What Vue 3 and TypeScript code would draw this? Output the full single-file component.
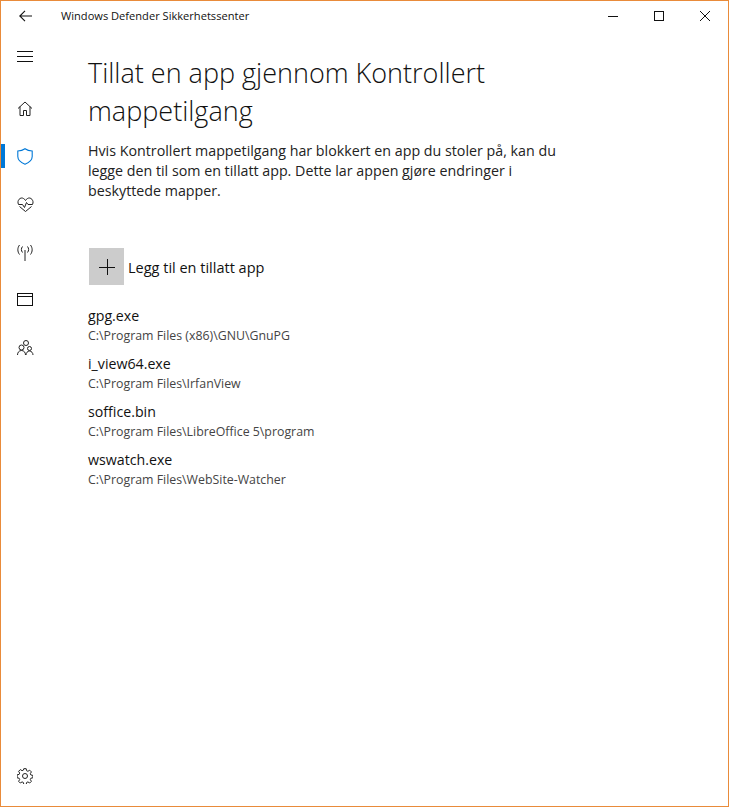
<script setup lang="ts">
const apps = [
  { name: "gpg.exe", path: "C:\\Program Files (x86)\\GNU\\GnuPG" },
  { name: "i_view64.exe", path: "C:\\Program Files\\IrfanView" },
  { name: "soffice.bin", path: "C:\\Program Files\\LibreOffice 5\\program" },
  { name: "wswatch.exe", path: "C:\\Program Files\\WebSite-Watcher" },
];
</script>

<template>
  <div class="window">
    <header class="titlebar">
      <button class="back" type="button" aria-label="Tilbake">
        <svg width="13" height="12" viewBox="0 0 13 12" fill="none" stroke="#111" stroke-width="1.1">
          <path d="M.8 6H13M6 .8L.8 6 6 11.200" />
        </svg>
      </button>
      <span class="title">Windows Defender Sikkerhetssenter</span>
      <div class="controls">
        <button type="button" aria-label="Minimer">
          <svg width="12" height="12" viewBox="0 0 12 12" stroke="#111" fill="none"><path d="M1 6.500h10" /></svg>
        </button>
        <button type="button" aria-label="Maksimer">
          <svg width="12" height="12" viewBox="0 0 12 12" stroke="#111" fill="none"><rect x="1.500" y="1.500" width="9" height="9" /></svg>
        </button>
        <button type="button" aria-label="Lukk">
          <svg width="12" height="12" viewBox="0 0 12 12" stroke="#111" fill="none"><path d="M1 1l10 10M11 1L1 11" /></svg>
        </button>
      </div>
    </header>

    <div class="body">
      <nav class="rail">
        <div class="rail-top">
          <div class="rail-item menu">
            <svg width="16" height="11" viewBox="0 0 16 11" stroke="#111" fill="none">
              <path d="M0 .5h16M0 5.500h16M0 10.500h16" />
            </svg>
          </div>
          <div class="rail-item">
            <svg width="16" height="15" viewBox="0 0 16 15" stroke="#222" fill="none">
              <path d="M1 7.500L8 1l7 6.500M3 5.500v9h3.500v-5h3v5H13v-9" />
            </svg>
          </div>
          <div class="rail-item active">
            <svg width="16" height="17" viewBox="0 0 16 17" stroke="#0078d7" stroke-width="1.100" fill="none">
              <path d="M8 .8C6 2.300 3.500 3 .8 3v5.500c0 3.500 3 6 7.200 7.700 4.200-1.700 7.200-4.200 7.200-7.700V3C12.500 3 10 2.300 8 .8z" />
            </svg>
          </div>
          <div class="rail-item">
            <svg width="17" height="15" viewBox="0 0 17 15" stroke="#222" fill="none">
              <path d="M2.500 9.500L8.500 14.500l6-5M1.500 7.500C-.5 3.500 3.500-.5 6.500 1.500c1 .6 1.500 1.200 2 2 .5-.8 1-1.400 2-2 3-2 7 2 5 6H11L9.500 5.500l-2 5-2-3z" />
            </svg>
          </div>
          <div class="rail-item">
            <svg width="16" height="17" viewBox="0 0 16 17" stroke="#222" fill="none">
              <path d="M8 6v11" />
              <path d="M5.500 2.500C4 4.500 4 6.500 5.500 8.500M10.500 2.500c1.500 2 1.500 4 0 6M2.500 1C.3 4 .3 7.500 2.500 10.500M13.500 1c2.200 3 2.200 6.500 0 9.500" />
            </svg>
          </div>
          <div class="rail-item">
            <svg width="16" height="14" viewBox="0 0 16 14" stroke="#111" fill="none">
              <rect x=".5" y=".5" width="15" height="12" />
              <path d="M.5 3.500h15" />
            </svg>
          </div>
          <div class="rail-item">
            <svg width="17" height="16" viewBox="0 0 17 16" stroke="#222" fill="none">
              <circle cx="9" cy="3" r="2.500" />
              <circle cx="4.500" cy="7.500" r="2.500" />
              <circle cx="12.500" cy="8.500" r="2" />
              <path d="M.5 15c0-2.500 1.500-4.500 4-4.500s4 2 4 4.500M9 15c0-2 1.500-4 3.500-4S16 13 16 15" />
            </svg>
          </div>
        </div>
        <div class="rail-item settings">
          <svg width="16" height="16" viewBox="0 0 16 16" stroke="#222" fill="none">
            <circle cx="8" cy="8" r="2.500" />
            <path d="M6.800 .7h2.400l.4 2 1.300.6 1.800-1.100 1.700 1.700-1.100 1.800.6 1.300 2 .4v2.400l-2 .4-.6 1.300 1.100 1.800-1.700 1.700-1.800-1.100-1.300.6-.4 2H6.800l-.4-2-1.300-.6-1.800 1.100-1.700-1.700 1.100-1.800-.6-1.300-2-.4V6.800l2-.4.6-1.300-1.100-1.800 1.700-1.700 1.800 1.100 1.300-.6z" />
          </svg>
        </div>
      </nav>

      <main class="content">
        <h1>Tillat en app gjennom Kontrollert mappetilgang</h1>
        <p class="intro">
          Hvis Kontrollert mappetilgang har blokkert en app du stoler på, kan du legge den til som en tillatt app. Dette lar appen gjøre endringer i beskyttede mapper.
        </p>

        <button class="add" type="button">
          <span class="add-icon">
            <svg width="16" height="16" viewBox="0 0 16 16" stroke="#111" fill="none"><path d="M8.500 0v16M0 8.500h16" /></svg>
          </span>
          <span class="add-label">Legg til en tillatt app</span>
        </button>

        <ul class="apps">
          <li v-for="app in apps" :key="app.name">
            <div class="app-name">{{ app.name }}</div>
            <div class="app-path">{{ app.path }}</div>
          </li>
        </ul>
      </main>
    </div>
  </div>
</template>

<style>
html,
body {
  margin: 0;
  background: #fff;
}
</style>

<style scoped>
.window {
  box-sizing: border-box;
  width: 729px;
  height: 807px;
  border: 1px solid #e98b3a;
  display: flex;
  flex-direction: column;
  background: #fff;
  color: #111;
  font-family: "Open Sans", "Noto Sans", sans-serif;
  overflow: hidden;
}

button {
  background: none;
  border: 0;
  padding: 0;
  font: inherit;
  color: inherit;
}

.titlebar {
  box-sizing: border-box;
  height: 31px;
  padding-bottom: 1px;
  display: flex;
  align-items: center;
  flex-shrink: 0;
}

.back {
  width: 48px;
  height: 30px;
  display: flex;
  align-items: center;
  justify-content: center;
}

.title {
  margin: 0 0 1px 12px;
  font-size: 11.100px;
}

.controls {
  margin-left: auto;
  display: flex;
}

.controls button {
  width: 46px;
  height: 30px;
  display: flex;
  align-items: center;
  justify-content: center;
}

.body {
  flex: 1;
  display: flex;
  min-height: 0;
}

.rail {
  width: 48px;
  flex-shrink: 0;
  display: flex;
  flex-direction: column;
  justify-content: space-between;
  padding-bottom: 6px;
}

.rail-item {
  height: 48px;
  display: flex;
  align-items: center;
  justify-content: center;
}

.rail-item.menu {
  margin-bottom: 4px;
}

.rail-item.active {
  position: relative;
}

.rail-item.active::before {
  content: "";
  position: absolute;
  left: 0;
  top: 12px;
  width: 4px;
  height: 24px;
  background: #0078d7;
}

.content {
  flex: 1;
  padding: 22px 0 0 39px;
}

h1 {
  margin: 0;
  width: 440px;
  font-size: 27px;
  font-weight: 300;
  line-height: 38px;
}

.intro {
  margin: 11px 0 0;
  width: 490px;
  font-size: 14.250px;
  line-height: 20px;
  color: #222;
}

.add {
  margin: 47px 0 0 1px;
  display: flex;
  align-items: center;
  gap: 4px;
  font-size: 14.500px;
}

.add-icon {
  box-sizing: border-box;
  width: 35px;
  height: 37px;
  padding: 1px 0 0 1px;
  background: #ccc;
  display: flex;
  align-items: center;
  justify-content: center;
}

.add-label {
  padding-top: 2px;
}

.apps {
  list-style: none;
  margin: 20px 0 0;
  padding: 0;
}

.apps li {
  height: 48px;
}

.app-name {
  font-size: 14.200px;
  line-height: 21px;
}

.app-path {
  font-size: 12.350px;
  line-height: 19px;
  color: #444;
}
</style>
